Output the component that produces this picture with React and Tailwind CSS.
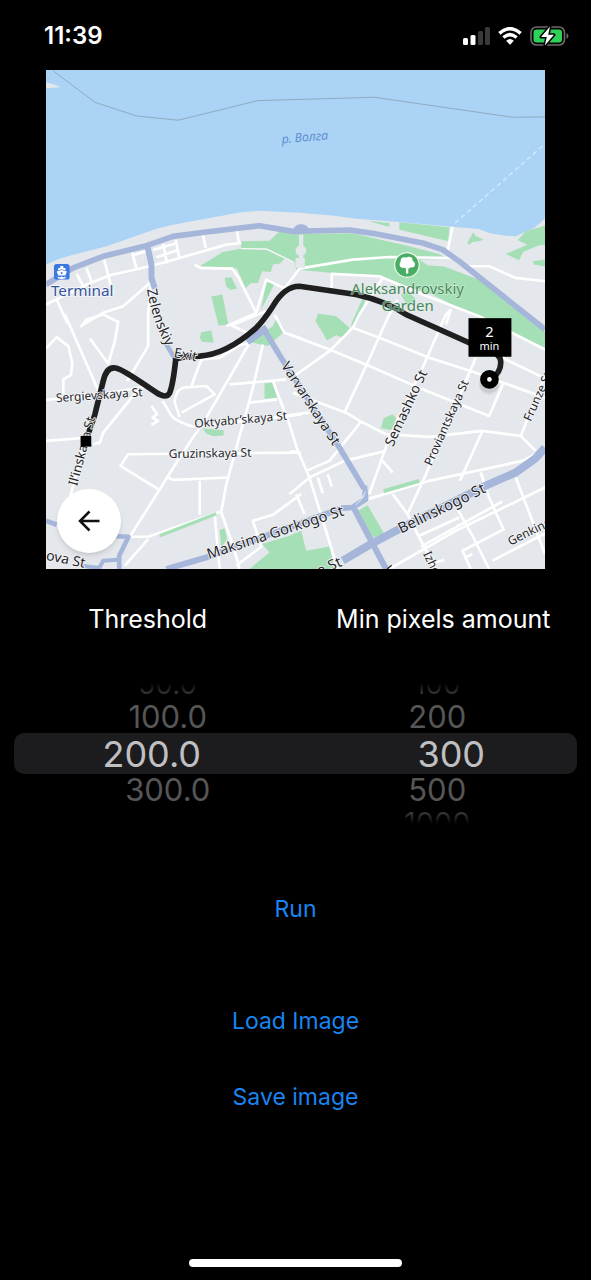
import { useState } from "react";

const WATER =
  "M18 15H1518V462L1485 490L1430 515L1400 513L1350 505L1320 493L1240 486L1080 472L950 462L880 452L780 444L660 438L600 443L400 480L350 492L200 545L100 570L60 582L18 600Z";

const PARKS = [
  "M605 530L690 528L718 502L745 497L785 510L774 590L760 592L682 553L605 552Z",
  "M480 605L550 562L600 553L680 556L735 582L722 597L700 600L694 622L668 620L655 655L635 655L618 670L592 612Z",
  "M750 508L940 506L1110 545L1200 568L1260 602L1340 660L1455 752L1518 802V850L1300 752L1180 690L1060 650L1000 632L880 625L770 615Z",
  "M555 640L575 638L592 672L572 676L560 665Z",
  "M515 696L548 690L566 780L537 783Z",
  "M680 652L707 654L665 735Z",
  "M480 820L485 803L515 798L522 835L487 832Z",
  "M632 833L700 785L712 758L732 790L735 800L685 845Z",
  "M675 957L700 955L712 1000L675 1003Z",
  "M488 1092L552 1098V1114L520 1116L500 1108Z",
  "M540 1397L555 1393L562 1425L545 1450Z",
  "M630 1515L690 1465L668 1440L750 1415L785 1400L800 1460L870 1447L885 1515Z",
  "M955 1340L985 1323L1035 1410L995 1422Z",
  "M1025 1092L1033 1062L1060 1050L1070 1060L1062 1098Z",
  "M835 750L840 748L890 755L930 790L912 820L890 812L862 828L850 805L828 770Z",
  "M985 468L1050 475V487Z",
  "M1080 473L1230 488L1228 530L1080 495Z",
  "M1285 535L1302 503L1310 515L1335 525L1318 530L1300 532L1290 540Z",
  "M1518 483L1460 500L1436 527L1465 540L1400 568L1440 587L1452 562L1500 542L1518 540Z",
  "M1482 590L1518 585V606L1484 600Z",
  "M970 700L980 700L960 755L940 790L935 780Z",
  "M1085 690L1110 682L1130 705L1105 725Z",
];

const STREETS = [
  "M18 720L140 660L210 632L330 605L420 580L560 540L605 535",
  "M50 705L82 775",
  "M110 628L130 665",
  "M140 610L155 652",
  "M193 585L220 690",
  "M277 563L290 612",
  "M280 572L318 560M340 556L410 536M350 578L415 556M370 538L382 597M408 525L418 577",
  "M490 512L498 550M592 498L598 535",
  "M330 655L250 725L190 745L130 780",
  "M122 788L140 765L190 750L235 772L225 830L205 898L150 822",
  "M335 640L325 750V845L262 950",
  "M75 750L180 990",
  "M18 852L50 818L85 845L97 895L93 932L70 945V990",
  "M18 1007L180 990L330 965",
  "M18 1130L120 1122M160 1140L180 1135L190 1105L290 982L310 965",
  "M180 990L145 1090L88 1310",
  "M465 600L482 610L578 612L597 640L650 745L560 785",
  "M650 745L680 645L735 672L780 612L940 585L1050 577L1240 580",
  "M705 750L735 805L785 822",
  "M570 780L630 808M575 782L680 740",
  "M485 885L540 880L600 842L632 835",
  "M630 835L500 1060L420 1180L270 1418",
  "M670 840L640 970L560 1260L545 1342",
  "M570 960L740 945",
  "M630 1015L712 1005",
  "M700 950L750 1080L775 1160L810 1240L895 1515",
  "M368 1010L390 1045Q400 1070 465 1088",
  "M420 1058L405 1015Q405 980 430 970L500 965L525 990L425 1045",
  "M485 885L455 965",
  "M335 1025L352 1050L338 1060L355 1070L335 1082",
  "M490 1085L785 1050",
  "M785 1165L265 1170L242 1205L355 1275",
  "M385 1240L400 1247L570 1240",
  "M480 1250V1352",
  "M270 1418H325L545 1342M325 1425L255 1505",
  "M525 1350L540 1515M545 1345L582 1450L600 1515M590 1505L665 1448L640 1370L700 1352L785 1290",
  "M750 810L870 855L990 905L1150 975L1350 1055L1392 958",
  "M750 945L870 860L940 790L960 750L1030 640",
  "M940 790L1020 820L1170 880L1310 925L1392 955L1518 1000",
  "M1075 705L1050 750L980 905L915 1045",
  "M1235 735L1220 750L1150 910L1050 1120L990 1290",
  "M1310 880L1280 950L1160 1230L1105 1350",
  "M760 985L825 1010L920 1045L965 1072L1040 1110L1170 1118L1330 1100L1445 1115L1490 1160",
  "M1445 1115L1518 935",
  "M965 1072L870 1190L800 1220M810 1240L915 1190L1040 1160M750 1290L810 1240",
  "M1030 1190L1060 1225",
  "M1330 1100L1262 1250",
  "M985 1305L1170 1250L1450 1190L1490 1170",
  "M1060 1290L1105 1350L1140 1420L1190 1515",
  "M835 1240L850 1287M865 1230L877 1267M770 1290L795 1350",
  "M750 1052L810 1045M750 1162H778",
  "M1325 1225L1350 1300L1395 1400",
  "M1430 1240L1518 1470",
  "M1255 1335L1300 1415L1350 1515",
  "M1140 1415L1260 1360M1145 1448L1390 1312M1050 1515L1250 1400L1518 1270M1395 1395L1270 1460L1295 1515M1275 1482L1300 1470M1360 1490L1518 1408M1190 1495L1215 1488",
  "M877 672V628L1020 635L1150 690L1320 755L1518 855",
  "M1390 880L1518 942",
  "M1235 735L1220 780",
  "M1240 487L1225 560",
  "M1290 605H1350L1430 640L1518 650",
];

const AVENUES = [
  ["M18 660L100 610L190 575L320 543L400 515L500 502L660 483L760 500L930 496L1000 506L1150 535L1210 555L1260 590L1518 795", 17],
  ["M323 545L335 600V640L345 672", 18],
  ["M670 790L728 885L900 1150L975 1275", 17],
  ["M975 1265L979 1305L940 1330L905 1332", 17],
  ["M945 1335L995 1430L1040 1515", 18],
  ["M910 1490L995 1440L1080 1395L1345 1262L1430 1225L1490 1182L1518 1150", 24],
  ["M380 1515L500 1480L900 1335", 18],
  ["M18 1370L50 1382M225 1416L266 1418L238 1475V1515", 14],
  ["M130 1506L178 1512L190 1490L232 1487", 12],
  ["M622 832L682 790", 22],
  ["M380 840L410 890", 14],
];

const ROUTE =
  "M138 1130L165 1050L190 950Q200 905 228 911Q245 912 350 985Q380 1005 390 985Q400 960 408 885Q420 876 480 875Q560 870 650 790Q672 768 700 725Q735 665 780 665L950 690Q1040 710 1100 750L1290 835L1350 860Q1385 868 1385 895Q1385 925 1355 945";

const TEXT_HALO = { paintOrder: "stroke" };

function StreetLabel({ x, y, angle, size, children }) {
  return (
    <text
      transform={`translate(${x} ${y}) rotate(${angle})`}
      fontSize={size}
      textAnchor="middle"
      dominantBaseline="central"
      fill="#26262a"
      stroke="#f4f5f7"
      strokeWidth="5"
      strokeLinejoin="round"
      style={TEXT_HALO}
    >
      {children}
    </text>
  );
}

function CityMap() {
  return (
    <svg
      viewBox="18 15 1500 1500"
      className="block h-full w-full font-['Noto_Sans',sans-serif]"
      role="img"
      aria-label="Route map"
    >
      <rect x="18" y="15" width="1500" height="1500" fill="#e4e7eb" />
      <path d={WATER} fill="#aad3f5" />
      <path d="M18 52L40 58L62 67L18 70Z" fill="#e4e7eb" />
      <path d="M40 18L165 112L290 153L415 166L655 107L1005 97L1420 157L1518 156" fill="none" stroke="#8fabc0" strokeWidth="3" />
      <path d="M1248 475L1518 237" fill="none" stroke="#d6ebfb" strokeWidth="4" strokeDasharray="14 10" />
      {PARKS.map((d) => (
        <path key={d} d={d} fill="#a5dfb5" />
      ))}
      <path d="M1140 585L1240 583L1285 605L1310 642L1215 606L1165 602Z" fill="#e4e7eb" />
      <g fill="none" stroke="#fff" strokeWidth="8" strokeLinejoin="round">
        {STREETS.map((d) => (
          <path key={d} d={d} />
        ))}
        <path d="M605 552L682 553L762 592" strokeWidth="3" />
      </g>
      <path d="M360 1415L530 1349" stroke="#a5dfb5" strokeWidth="10" />
      <path d="M1033 1281L1140 1250" stroke="#a5dfb5" strokeWidth="12" />
      <path d="M785 510V608" stroke="#e4e7eb" strokeWidth="13" />
      <path d="M768 610V580H796V610Z" fill="#e4e7eb" />
      <circle cx="784" cy="558" r="16" fill="#e4e7eb" />
      <g fill="none" stroke="#a5b6da" strokeLinejoin="round">
        {AVENUES.map(([d, width]) => (
          <path key={d} d={d} strokeWidth={width} />
        ))}
      </g>
      <ellipse cx="785" cy="493" rx="22" ry="14" fill="#a5b6da" />
      <path d="M978 1282L970 1302L950 1322M962 1290L970 1278" fill="none" stroke="#e8ecf5" strokeWidth="3" />

      <path d={ROUTE} fill="none" stroke="#1f1f1f" strokeWidth="17" strokeLinejoin="round" />

      <g textAnchor="middle">
        <text transform="translate(796 216) rotate(-5)" fontSize="37" fontStyle="italic" fill="#5f8fce" dominantBaseline="central">
          р. Волга
        </text>
        <text x="127" y="693" fontSize="46" fill="#34549c" stroke="#f4f5f7" strokeWidth="6" style={TEXT_HALO}>
          Terminal
        </text>
        <g fontSize="45" fill="#47895c" stroke="#e6f3e9" strokeOpacity="0.6" strokeWidth="4" style={TEXT_HALO}>
          <text x="1105" y="688">Aleksandrovskiy</text>
          <text x="1105" y="739">Garden</text>
        </g>
      </g>

      <rect x="42" y="598" width="47" height="47" rx="8" fill="#3b78e0" />
      <g fill="#fff">
        <path d="M61 604H70V610H76L77 618L65 614L54 618L55 610H61Z" />
        <path d="M50 621L65 616L81 621L76 633H55Z" />
        <path d="M52 635Q58 641 65 636Q72 641 79 635L76 641Q65 645 54 641Z" />
      </g>
      <circle cx="65" cy="625" r="3" fill="#3b78e0" />

      <circle cx="1103" cy="601" r="37" fill="#48ad62" stroke="#e3f5e7" strokeWidth="4" />
      <g fill="#fff">
        <circle cx="1095" cy="589" r="11" />
        <circle cx="1109" cy="587" r="11" />
        <circle cx="1091" cy="600" r="10" />
        <circle cx="1117" cy="599" r="10" />
        <circle cx="1104" cy="601" r="11" />
        <path d="M1100 606H1107V627H1100Z" />
      </g>

      <path id="zelenskiy" d="M322 674Q332 752 374 836L390 870" fill="none" />
      <text fontSize="42" fill="#26262a" stroke="#f4f5f7" strokeWidth="5" style={TEXT_HALO}>
        <textPath href="#zelenskiy">Zelenskiy</textPath>
      </text>
      <StreetLabel x={438} y={868} angle={11} size={41}>Exit</StreetLabel>
      <StreetLabel x={178} y={991} angle={-4} size={36}>Sergievskaya St</StreetLabel>
      <StreetLabel x={124} y={1160} angle={-75} size={39}>Il’inskaya St</StreetLabel>
      <StreetLabel x={603} y={1065} angle={-5} size={36}>Oktyabr’skaya St</StreetLabel>
      <StreetLabel x={511} y={1166} angle={-1} size={36}>Gruzinskaya St</StreetLabel>
      <StreetLabel x={816} y={1016} angle={57} size={42}>Varvarskaya St</StreetLabel>
      <StreetLabel x={1098} y={1030} angle={-65} size={41}>Semashko St</StreetLabel>
      <StreetLabel x={1221} y={1075} angle={-66} size={36}>Proviantskaya St</StreetLabel>
      <StreetLabel x={1495} y={996} angle={-66} size={36}>Frunze St</StreetLabel>
      <StreetLabel x={706} y={1402} angle={-18} size={44}>Maksima Gorkogo St</StreetLabel>
      <StreetLabel x={1206} y={1330} angle={-26} size={45}>Belinskogo St</StreetLabel>
      <StreetLabel x={1470} y={1402} angle={-26} size={36}>Genkina</StreetLabel>
      <StreetLabel x={1190} y={1520} angle={65} size={36}>Izhorsk</StreetLabel>
      <StreetLabel x={78} y={1483} angle={12} size={42}>ova St</StreetLabel>
      <StreetLabel x={868} y={1504} angle={-24} size={44}>a St</StreetLabel>
      <path d="M1043 1515L1057 1504" stroke="#26262a" strokeWidth="4" />
      <rect x="122" y="1115" width="32" height="32" fill="#000" />

      <circle cx="1350" cy="962" r="30" fill="#000" opacity="0.06" />
      <circle cx="1350" cy="956" r="30" fill="#000" opacity="0.06" />
      <circle cx="1351" cy="945" r="28" fill="#000" />
      <circle cx="1351" cy="945" r="7" fill="#fff" />
      <rect x="1288" y="761" width="129" height="116" fill="#000" />
      <g fill="#fff" textAnchor="middle">
        <text x="1351" y="818" fontSize="44">2</text>
        <text x="1351" y="856" fontSize="33">min</text>
      </g>
    </svg>
  );
}

function StatusBar() {
  return (
    <header className="flex items-center justify-between pt-[18px] pr-[22px] pb-4 pl-[44px]">
      <time className="text-[24px] leading-9 font-semibold">11:39</time>
      <div className="flex items-center gap-2">
        <svg viewBox="0 0 27 18" className="h-[18px] w-[27px]" aria-label="Signal">
          <rect x="0" y="11" width="5" height="7" rx="1.5" fill="#fff" />
          <rect x="7.5" y="8" width="5" height="10" rx="1.5" fill="#fff" />
          <rect x="15" y="4" width="5" height="14" rx="1.5" fill="#3a3a3c" />
          <rect x="22" y="0" width="5" height="18" rx="1.5" fill="#3a3a3c" />
        </svg>
        <svg viewBox="0 0 24 18" className="h-[18px] w-6" aria-label="Wi-Fi" fill="none" stroke="#fff">
          <path d="M1.4 6.4Q12 -3 22.6 6.4" strokeWidth="3.6" />
          <path d="M5.4 10.6Q12 4.6 18.6 10.6" strokeWidth="3.4" />
          <path d="M8.2 13.8Q12 10.4 15.8 13.8L12.6 17.2Q12 17.8 11.4 17.2Z" fill="#fff" stroke="none" />
        </svg>
        <svg viewBox="0 0 39 20" className="h-5 w-[39px]" aria-label="Battery charging">
          <rect x="1" y="1" width="33.500" height="18" rx="5.500" fill="none" stroke="#6b6b6e" strokeWidth="1.600" />
          <rect x="3.500" y="3.500" width="28.500" height="13" rx="3.200" fill="#30d158" />
          <path d="M36.500 7Q38.500 8 38.500 10Q38.500 12 36.500 13Z" fill="#6b6b6e" />
          <path d="M20 0.500L11 11H16.800L14.800 19.500L24 8.800H18.200Z" fill="#fff" stroke="#000" strokeWidth="3" strokeLinejoin="round" style={TEXT_HALO} />
        </svg>
      </div>
    </header>
  );
}

const ROWS = [
  { offset: -2, row: "h-3 items-end mask-t-from-0% mask-t-to-100%", text: "text-[28px] leading-[22px] text-[#3c3c3c]" },
  { offset: -1, row: "h-[38px] items-end", text: "text-[31px] leading-8 text-[#565656]" },
  { offset: 0, row: "h-[41px] items-center", text: "text-[36px] leading-10 text-[#c0c0c2]" },
  { offset: 1, row: "h-[38px] items-start", text: "text-[31px] leading-8 text-[#565656]" },
  { offset: 2, row: "h-3 items-start mask-b-from-0% mask-b-to-100%", text: "text-[29px] leading-[22px] text-[#3c3c3c]" },
];

function Wheel({ label, values, initial, restClass, activeClass }) {
  const [index, setIndex] = useState(initial);
  return (
    <div role="listbox" aria-label={label} className="relative flex-1">
      {ROWS.map(({ offset, row, text }) => {
        const value = values[index + offset];
        return (
          <div
            key={offset}
            className={`flex justify-center overflow-hidden ${row} ${offset === 0 ? activeClass : restClass}`}
          >
            {value !== undefined && (
              <button
                type="button"
                role="option"
                aria-selected={offset === 0}
                onClick={() => setIndex(index + offset)}
                className={text}
              >
                {value}
              </button>
            )}
          </div>
        );
      })}
    </div>
  );
}

export default function App() {
  return (
    <div className="flex min-h-screen flex-col bg-black font-[Inter,sans-serif] text-white">
      <StatusBar />
      <main className="flex flex-1 flex-col">
        <div className="px-[46px]">
          <div className="relative aspect-square overflow-hidden">
            <CityMap />
            <button
              type="button"
              aria-label="Back"
              className="absolute bottom-4 left-[11px] flex size-16 items-center justify-center rounded-full bg-white shadow-md"
            >
              <svg viewBox="0 0 24 24" className="size-6" fill="none" stroke="#111" strokeWidth="2.500">
                <path d="M22.500 12H3M12.500 2.500L3 12L12.500 21.500" />
              </svg>
            </button>
          </div>
        </div>

        <div className="flex pt-8 text-center text-[25px] leading-9">
          <h2 className="flex-1">Threshold</h2>
          <h2 className="flex-1">Min pixels amount</h2>
        </div>

        <div className="relative mt-[46px] flex">
          <div className="absolute inset-x-[14px] top-[50px] h-[41px] rounded-[10px] bg-[#1c1c1e]" />
          <Wheel
            label="Threshold"
            values={["50.0", "100.0", "200.0", "300.0"]}
            initial={2}
            restClass="pl-10"
            activeClass="pl-2"
          />
          <Wheel
            label="Min pixels amount"
            values={["100", "200", "300", "500", "1000"]}
            initial={2}
            restClass="pr-3"
            activeClass="pl-4"
          />
        </div>

        <div className="flex flex-col items-center pt-[67px] text-[23px] leading-9 text-[#1a84f0]">
          <button type="button">Run</button>
          <button type="button" className="mt-[76px]">Load Image</button>
          <button type="button" className="mt-10">Save image</button>
        </div>
      </main>
      <footer className="flex justify-center pb-[13px]">
        <div className="h-2 w-[36%] rounded-full bg-white" />
      </footer>
    </div>
  );
}
